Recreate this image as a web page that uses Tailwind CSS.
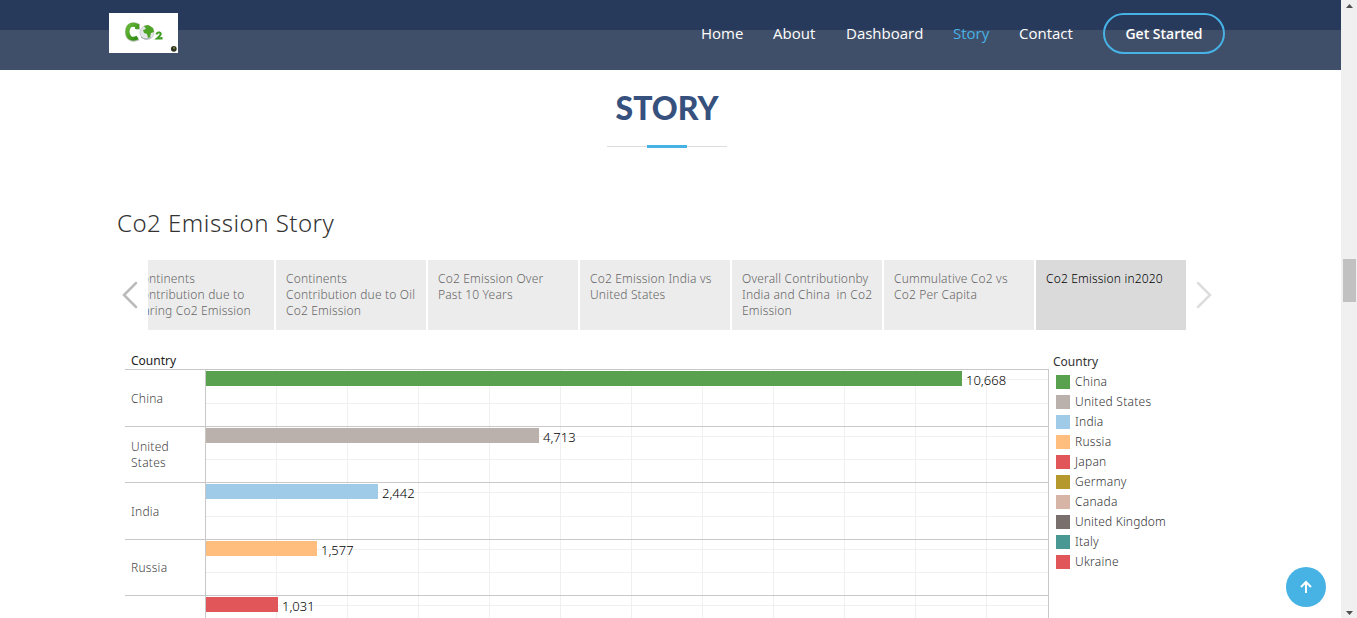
<!DOCTYPE html>
<html lang="en">
<head>
<meta charset="utf-8">
<title>Co2 Emission Story</title>
<script src="https://cdn.jsdelivr.net/npm/@tailwindcss/browser@4"></script>
</head>
<body class="flex h-[618px] w-[1357px] overflow-hidden bg-white font-['Noto_Sans',sans-serif]">
<div class="h-full w-[1341px] shrink-0 overflow-hidden">
  <header class="flex h-[70px] bg-linear-to-b from-[#273a5b] from-[30px] to-[#3f4e69] to-[30px] pl-[109px] font-['Open_Sans',sans-serif] text-[15px] font-medium text-white">
    <div class="mt-[13px] h-10 w-[69px] bg-white">
      <svg class="block" width="69" height="40" viewBox="0 0 69 40">
        <defs><linearGradient id="g" x1="0" y1="0" x2="1" y2="1"><stop offset="0" stop-color="#69b83a"/><stop offset="1" stop-color="#2f8c10"/></linearGradient></defs>
        <path d="M29 16.500V12.500C22.500 9.500 18 13 18 19C18 25.500 23 28.500 29.500 25.500" fill="none" stroke="#26451c" stroke-width="4" opacity=".35"/>
        <path d="M28 16V12.500C21.500 10 18.500 13.500 18.500 18.500C18.500 24.500 22.500 27.500 28.500 24.500" fill="none" stroke="url(#g)" stroke-width="4"/>
        <circle cx="38" cy="19.500" r="7" fill="#e3e7e8" stroke="#b5bebd" stroke-width=".7"/>
        <path d="M32 24q5 4 10 0" fill="none" stroke="#9aa3a5"/>
        <path d="M35 13l4-1 5 3 1 4-3 1-1 4-2 1-1-4-3-1-1-3 3-1z" fill="#4da326"/>
        <path d="M47.500 21.500q.5-2.500 3-2c3 .8 0 4-2.500 6h4.500v-1.500" fill="none" stroke="#3e9c22" stroke-width="2"/>
        <circle cx="64.800" cy="35.800" r="2.900" fill="#303626"/><circle cx="65" cy="35" r="1" fill="#7d8a32"/>
      </svg>
    </div>
    <nav class="flex h-[67px] items-center pl-[523px] whitespace-nowrap">
      <a class="w-[72px]">Home</a><a class="w-[73px]">About</a><a class="w-[107px]">Dashboard</a><a class="w-[66px] text-[#47b2e4]">Story</a><a class="w-[84px]">Contact</a>
      <a class="flex h-[41px] w-[122px] items-center justify-center rounded-full border-2 border-[#47b2e4] text-sm font-semibold">Get Started</a>
    </nav>
  </header>
  <section class="flex flex-col items-center pr-[7px]">
    <h2 class="mt-[14px] h-[49px] font-['Lato',sans-serif] text-[32px] leading-[48px] font-black text-[#37517e]"><span id="story">STORY</span></h2>
    <div class="mt-3 flex h-[3px] w-[120px] items-center"><i class="h-px flex-1 bg-[#ddd]"></i><i class="h-[3px] w-10 bg-[#47b2e4]"></i><i class="h-px flex-1 bg-[#ddd]"></i></div>
  </section>
  <main class="pl-[117px] font-light text-[#333]">
    <h3 class="mt-[57px] h-[38px] text-[24px] leading-9 tracking-[.5px]"><span>Co2 Emission Story</span></h3>
    <div class="mt-[17px] flex h-[70px] items-center text-[12px] leading-4 tracking-[.18px] whitespace-pre text-[#666]">
      <svg class="w-[31px] shrink-0" height="30" viewBox="0 0 31 30"><path d="M19 3L7 15L19 27" fill="none" stroke="#bbb" stroke-width="2.500" stroke-linecap="round"/></svg>
      <div class="flex h-[70px] w-[1038px] justify-end gap-0.5 overflow-hidden">
        <div class="w-[150px] shrink-0 bg-[#ececec] px-2.5 py-[11px]">Continents<br>Contribution due to<br>Flaring Co2 Emission</div>
        <div class="w-[150px] shrink-0 bg-[#ececec] px-2.5 py-[11px]">Continents<br>Contribution due to Oil<br>Co2 Emission</div>
        <div class="w-[150px] shrink-0 bg-[#ececec] px-2.5 py-[11px]">Co2 Emission Over<br>Past 10 Years</div>
        <div class="w-[150px] shrink-0 bg-[#ececec] px-2.5 py-[11px]">Co2 Emission India vs<br>United States</div>
        <div class="w-[150px] shrink-0 bg-[#ececec] px-2.5 py-[11px]">Overall Contributionby<br>India and China  in Co2<br>Emission</div>
        <div class="w-[150px] shrink-0 bg-[#ececec] px-2.5 py-[11px]">Cummulative Co2 vs<br>Co2 Per Capita</div>
        <div class="w-[150px] shrink-0 bg-[#dadada] px-2.5 py-[11px] text-black">Co2 Emission in2020</div>
      </div>
      <svg class="w-[31px] shrink-0" height="30" viewBox="0 0 31 30"><path d="M12 3L24 15L12 27" fill="none" stroke="#ddd" stroke-width="2.500" stroke-linecap="round"/></svg>
    </div>
    <div class="flex pl-2 text-[12px] leading-4 tracking-[.25px]">
      <div class="w-[924px] pt-[23px]">
        <div class="h-4 pl-1.5 font-normal tracking-[0px] text-[#222]">Country</div>
        <div class="border-r border-[#c8c8c8]">
          <div class="flex h-[57px] border-t border-[#c8c8c8]">
            <div class="flex w-[81px] items-center border-r border-[#c8c8c8] pt-0.5 pl-1.5 text-[#444]">China</div>
            <div class="relative flex-1 bg-[linear-gradient(to_right,transparent_70px,#f0f0f0_70px)] bg-[length:71px_100%] pt-px"><i class="absolute top-[9px] h-px w-full bg-[#f0f0f0]"></i><i class="absolute top-[33px] h-px w-full bg-[#f0f0f0]"></i><div class="relative flex gap-1 text-[13px] tracking-[0px] text-black"><b class="h-[15px] bg-[#59a14f]" style="width:756px"></b><span class="mt-px">10,668</span></div></div>
          </div>
          <div class="flex h-14 border-t border-[#c8c8c8]">
            <div class="flex w-[81px] items-center border-r border-[#c8c8c8] pl-1.5 text-[#444]">United<br>States</div>
            <div class="relative flex-1 bg-[linear-gradient(to_right,transparent_70px,#f0f0f0_70px)] bg-[length:71px_100%] pt-px"><i class="absolute top-[9px] h-px w-full bg-[#f0f0f0]"></i><i class="absolute top-[32px] h-px w-full bg-[#f0f0f0]"></i><div class="relative flex gap-1 text-[13px] tracking-[0px] text-black"><b class="h-[15px] bg-[#bab0ac]" style="width:333px"></b><span class="mt-px">4,713</span></div></div>
          </div>
          <div class="flex h-[57px] border-t border-[#c8c8c8]">
            <div class="flex w-[81px] items-center border-r border-[#c8c8c8] pt-0.5 pl-1.5 text-[#444]">India</div>
            <div class="relative flex-1 bg-[linear-gradient(to_right,transparent_70px,#f0f0f0_70px)] bg-[length:71px_100%] pt-px"><i class="absolute top-[9px] h-px w-full bg-[#f0f0f0]"></i><i class="absolute top-[33px] h-px w-full bg-[#f0f0f0]"></i><div class="relative flex gap-1 text-[13px] tracking-[0px] text-black"><b class="h-[15px] bg-[#a0cbe8]" style="width:172px"></b><span class="mt-px">2,442</span></div></div>
          </div>
          <div class="flex h-14 border-t border-[#c8c8c8]">
            <div class="flex w-[81px] items-center border-r border-[#c8c8c8] pl-1.5 text-[#444]">Russia</div>
            <div class="relative flex-1 bg-[linear-gradient(to_right,transparent_70px,#f0f0f0_70px)] bg-[length:71px_100%] pt-px"><i class="absolute top-[9px] h-px w-full bg-[#f0f0f0]"></i><i class="absolute top-[32px] h-px w-full bg-[#f0f0f0]"></i><div class="relative flex gap-1 text-[13px] tracking-[0px] text-black"><b class="h-[15px] bg-[#ffbe7d]" style="width:111px"></b><span class="mt-px">1,577</span></div></div>
          </div>
          <div class="flex h-[57px] border-t border-[#c8c8c8]">
            <div class="w-[81px] border-r border-[#c8c8c8]"></div>
            <div class="relative flex-1 bg-[linear-gradient(to_right,transparent_70px,#f0f0f0_70px)] bg-[length:71px_100%] pt-px"><i class="absolute top-[9px] h-px w-full bg-[#f0f0f0]"></i><div class="relative flex gap-1 text-[13px] tracking-[0px] text-black"><b class="h-[15px] bg-[#e15759]" style="width:72px"></b><span class="mt-px">1,031</span></div></div>
          </div>
        </div>
      </div>
      <div class="pt-[24px] pl-1">
        <div class="mb-0.5 h-4 font-normal tracking-[0px]">Country</div>
        <ul class="pl-[3px] leading-5">
          <li class="flex items-center gap-[5px]"><i class="size-3.5 bg-[#59a14f]"></i><span>China</span></li>
          <li class="flex items-center gap-[5px]"><i class="size-3.5 bg-[#bab0ac]"></i><span>United States</span></li>
          <li class="flex items-center gap-[5px]"><i class="size-3.5 bg-[#a0cbe8]"></i><span>India</span></li>
          <li class="flex items-center gap-[5px]"><i class="size-3.5 bg-[#ffbe7d]"></i><span>Russia</span></li>
          <li class="flex items-center gap-[5px]"><i class="size-3.5 bg-[#e15759]"></i><span>Japan</span></li>
          <li class="flex items-center gap-[5px]"><i class="size-3.5 bg-[#b6992d]"></i><span>Germany</span></li>
          <li class="flex items-center gap-[5px]"><i class="size-3.5 bg-[#d7b5a6]"></i><span>Canada</span></li>
          <li class="flex items-center gap-[5px]"><i class="size-3.5 bg-[#79706e]"></i><span class="tracking-[.15px]">United Kingdom</span></li>
          <li class="flex items-center gap-[5px]"><i class="size-3.5 bg-[#499894]"></i><span>Italy</span></li>
          <li class="flex items-center gap-[5px]"><i class="size-3.5 bg-[#e15759]"></i><span>Ukraine</span></li>
        </ul>
      </div>
    </div>
  </main>
</div>
<div class="flex h-full w-4 shrink-0 flex-col items-center bg-[#f0f0f0]">
  <svg class="mt-1" width="7" height="4" viewBox="0 0 7 4"><path d="M0 4L3.500 0L7 4z" fill="#505050"/></svg>
  <div class="mt-[251px] h-[43px] w-[13px] bg-[#c1c1c1]"></div>
  <svg class="mt-auto mb-[3px]" width="7" height="4" viewBox="0 0 7 4"><path d="M0 0L3.500 4L7 0z" fill="#505050"/></svg>
</div>
<a class="absolute top-[567px] left-[1286px] flex size-10 items-center justify-center rounded-full bg-[#47b2e4]"><svg width="14" height="14" viewBox="0 0 14 14"><path d="M7 13V2M2 7L7 2L12 7" fill="none" stroke="#fff" stroke-width="2"/></svg></a>
</body>
</html>
